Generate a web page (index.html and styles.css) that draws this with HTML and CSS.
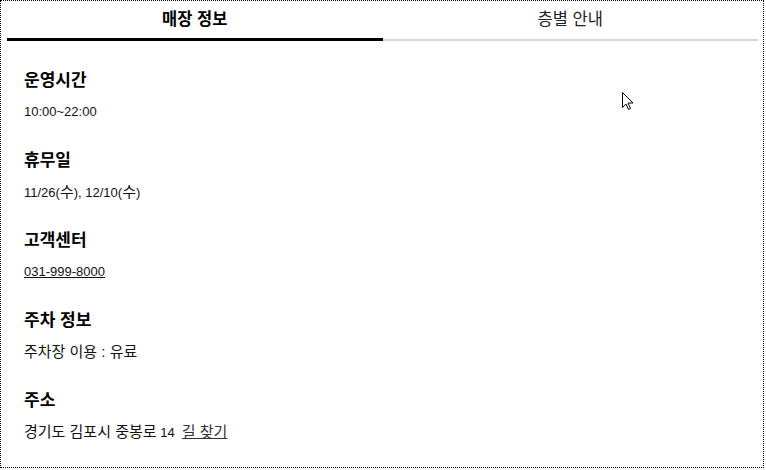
FILE: index.html
```html
<!DOCTYPE html>
<html lang="ko">
<head>
<meta charset="utf-8">
<link rel="stylesheet" href="styles.css">
</head>
<body>
<div class="frame">
  <div class="tabs">
    <div class="tab active">매장 정보</div>
    <div class="tab">층별 안내</div>
  </div>
  <div class="info">
    <section class="item">
      <h3 class="item-title">운영시간</h3>
      <p class="item-text">10:00~22:00</p>
    </section>
    <section class="item">
      <h3 class="item-title">휴무일</h3>
      <p class="item-text">11/26(<span class="ko">수</span>), 12/10(<span class="ko">수</span>)</p>
    </section>
    <section class="item">
      <h3 class="item-title">고객센터</h3>
      <p class="item-text"><a class="tel" href="#">031-999-8000</a></p>
    </section>
    <section class="item">
      <h3 class="item-title">주차 정보</h3>
      <p class="item-text"><span class="ko">주차장 이용 : 유료</span></p>
    </section>
    <section class="item">
      <h3 class="item-title">주소</h3>
      <p class="item-text"><span class="ko">경기도 김포시 중봉로</span> 14 &nbsp;<a class="map ko" href="#">길 찾기</a></p>
    </section>
  </div>
  <svg class="cursor" width="13" height="19" viewBox="0 0 13 19">
    <path d="M0.5 0.5 L0.5 15.5 L4 12 L6.5 17.5 L8.5 16.5 L6 11 L11 11 Z" fill="#fff" stroke="#000" stroke-width="1" stroke-linejoin="miter"/>
  </svg>
</div>
</body>
</html>
```

FILE: styles.css
```css
html, body {
  margin: 0;
  padding: 0;
  background: #fff;
}
body {
  font-family: "Liberation Sans", "Noto Sans CJK KR", sans-serif;
  color: #111;
}
.frame {
  position: relative;
  box-sizing: border-box;
  width: 764px;
  height: 468px;
  border: 1px dotted #000;
  padding: 0 5px 0 6px;
}
.tabs {
  display: flex;
}
.tab {
  flex: 1;
  text-align: center;
  font-size: 16.5px;
  line-height: 37px;
  height: 37px;
  border-bottom: 2px solid #d4d4d8;
  padding-bottom: 1px;
  color: #222;
}
.tab.active {
  font-weight: bold;
  color: #000;
  border-bottom: 3px solid #000;
  padding-bottom: 0;
}
.info {
  padding: 30px 0 0 17px;
  display: flex;
  flex-direction: column;
  gap: 29.6px;
}
.item-title {
  margin: 0 0 12px;
  font-size: 17px;
  line-height: 20px;
  font-weight: bold;
  color: #000;
}
.item-text {
  margin: 0;
  font-size: 13px;
  line-height: 18px;
  color: #111;
}
.ko {
  font-size: 15px;
}
.tel {
  color: #111;
  text-decoration: underline;
}
.map {
  color: #333;
  text-decoration: underline;
}
.cursor {
  position: absolute;
  left: 621px;
  top: 91px;
}
```
